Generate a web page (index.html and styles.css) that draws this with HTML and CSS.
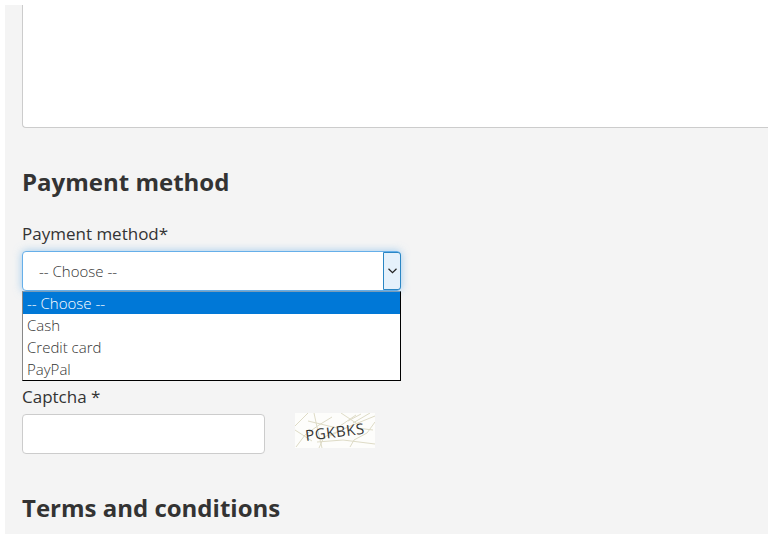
FILE: index.html
```
<!DOCTYPE html>
<html>
<head lang="en">
    <meta charset="UTF-8">
    <title>Payment method</title>
    <link rel="stylesheet" href="styles.css">
</head>
<body>
    <form id="container">
        <div class="message"></div>

        <h2>Payment method</h2>
        <div class="label">Payment method*</div>
        <div class="select">
            <span class="value">-- Choose --</span>
            <span class="arrow">
                <svg width="9" height="6" viewBox="0 0 9 6"><path d="M0.5 0.8 L4.5 4.7 L8.5 0.8" fill="none" stroke="#222" stroke-width="1.2"/></svg>
            </span>
            <ul class="options">
                <li class="selected">-- Choose --</li>
                <li>Cash</li>
                <li>Credit card</li>
                <li>PayPal</li>
            </ul>
        </div>

        <div class="label captcha-label">Captcha *</div>
        <div class="captcha">
            <input type="text" class="code">
            <svg class="picture" width="80" height="35" viewBox="0 0 80 35">
                <rect width="80" height="35" fill="#fdfdfb"/>
                <g fill="none" stroke="#dedbc6" stroke-width="1">
                    <path d="M0 13 L13 0 M0 17 L17 28 M1 34 L10 22 L24 12 L37 4"/>
                    <path d="M19 0 L22 14 L27 35 M13 8 L42 15 L61 2"/>
                    <path d="M22 29 L48 27 L80 31 M35 23 L53 14 L80 3"/>
                    <path d="M24 35 L29 24 L44 18 M53 8 L66 1 M58 10 L75 0"/>
                    <path d="M55 34 L59 27 L72 20 L80 9 M62 15 L78 17 M46 0 L64 12"/>
                </g>
                <text x="11" y="28" textLength="59" transform="rotate(-7 11 28)">PGKBKS</text>
            </svg>
        </div>

        <h2 class="terms">Terms and conditions</h2>
    </form>
</body>
</html>
```
FILE: styles.css
```
*{
    margin: 0;
    padding: 0;
    box-sizing: border-box;
}
body{
    background: #fff;
    font-family: "Open Sans", "Noto Sans", sans-serif;
    color: #333;
    overflow: hidden;
}
ul{
    list-style: none;
}
#container{
    width: 763px;
    height: 529px;
    margin: 5px;
    padding-left: 17px;
    background: #f4f4f4;
    overflow: hidden;
}
.message{
    height: 123px;
    background: #fff;
    border: 1px solid #ccc;
    border-width: 0 0 1px 1px;
    border-bottom-left-radius: 4px;
}
h2{
    margin-top: 37px;
    font-size: 24px;
    line-height: 34px;
    font-weight: bold;
}
.label{
    margin-top: 23px;
    font-size: 17px;
    line-height: 24px;
}
.select{
    position: relative;
    display: flex;
    justify-content: space-between;
    width: 379px;
    height: 40px;
    margin-top: 5px;
    background: #fff;
    border: 1px solid #66afe9;
    border-radius: 4px;
    box-shadow: 0 0 8px rgba(102, 175, 233, .6);
    font-size: 15px;
    font-weight: 300;
}
.value{
    padding-left: 16px;
    line-height: 39px;
}
.arrow{
    display: flex;
    align-items: center;
    justify-content: center;
    width: 18px;
    margin: 0 -1px 0 0;
    background: #e5f1fb;
    border: 1px solid #2a86c4;
    border-radius: 0 3px 3px 0;
}
.options{
    position: absolute;
    left: -1px;
    top: 39px;
    width: 379px;
    background: #fff;
    border: 1px solid #000;
    border-top-color: #7a9cb8;
    border-left-color: #888;
}
.options li{
    height: 22px;
    padding-left: 4px;
    line-height: 22px;
}
.options .selected{
    background: #0078d7;
    color: #fff;
}
.captcha-label{
    margin-top: 94px;
}
.captcha{
    display: flex;
    align-items: flex-start;
    margin-top: 5px;
}
.code{
    width: 243px;
    height: 40px;
    background: #fff;
    border: 1px solid #ccc;
    border-radius: 4px;
}
.picture{
    margin: -1px 0 0 30px;
}
.picture text{
    font-family: "Open Sans", sans-serif;
    font-size: 15px;
    fill: #333;
}
.terms{
    margin-top: 37px;
}
```
